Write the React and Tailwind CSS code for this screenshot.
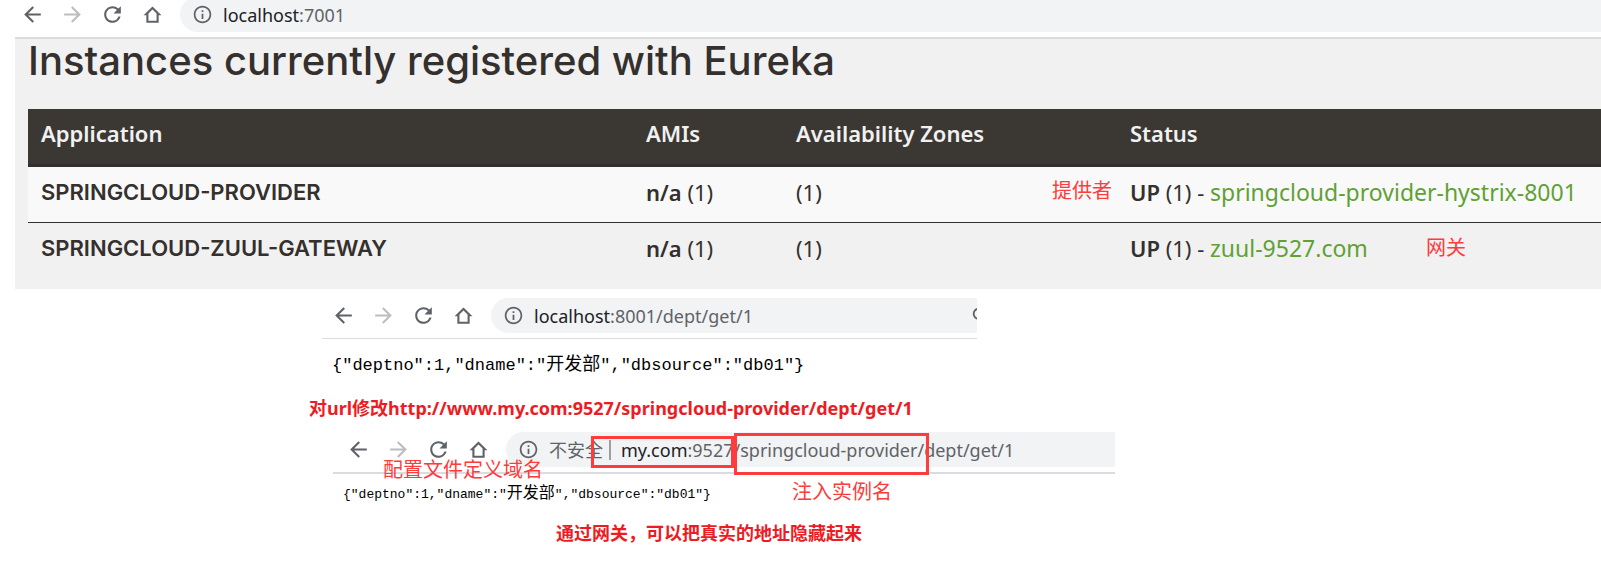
import React from "react";
import {
  MdArrowBack,
  MdArrowForward,
  MdInfoOutline,
  MdRefresh,
  MdSearch,
} from "react-icons/md";

const instances = [
  {
    name: "SPRINGCLOUD-PROVIDER",
    link: "springcloud-provider-hystrix-8001",
  },
  {
    name: "SPRINGCLOUD-ZUUL-GATEWAY",
    link: "zuul-9527.com",
  },
];

const HomeIcon = () => (
  <svg viewBox="0 0 24 24" className="size-[25px]" fill="currentColor">
    <path
      fillRule="evenodd"
      d="M12 4.4 3.4 12.8h2.7v7.2h11.8v-7.2h2.7zM12 7.2l3.9 3.8v7.1H8.1V11z"
    />
  </svg>
);

const Note = ({ className, children }) => (
  <span
    className={`absolute whitespace-nowrap text-xl leading-6 text-[#ff3b3b] ${className}`}
  >
    {children}
  </span>
);

const BrowserBar = ({ id, host, path, warning, clipped, className = "" }) => (
  <div className={`flex items-center pb-[5px] text-[#5f6368] ${className}`}>
    <div className="flex shrink-0 gap-[15px]">
      <button aria-label="Back">
        <MdArrowBack className="size-[25px]" />
      </button>
      <button aria-label="Forward" className="text-[#bbbdbf]">
        <MdArrowForward className="size-[25px]" />
      </button>
      <button aria-label="Reload">
        <MdRefresh className="size-[25px]" />
      </button>
      <button aria-label="Home">
        <HomeIcon />
      </button>
    </div>
    <div className="ml-[15px] flex h-[35px] min-w-0 flex-1 items-center overflow-hidden rounded-l-full bg-[#f1f3f4] pl-3 font-['Noto_Sans','Noto_Sans_CJK_SC',sans-serif] text-lg">
      <MdInfoOutline className="mr-[10px] size-[21px] shrink-0" />
      {warning && (
        <span className="mr-[10px] shrink-0 border-r-2 border-[#9aa0a6] pr-1.5 leading-5">
          {warning}
        </span>
      )}
      <label htmlFor={id} className="text-[#202124]">
        {host}
      </label>
      <input
        id={id}
        defaultValue={path}
        className="min-w-0 flex-1 bg-transparent outline-none"
      />
      {clipped && (
        <span className="w-[7px] shrink-0 overflow-hidden">
          <MdSearch className="size-[22px]" />
        </span>
      )}
    </div>
  </div>
);

const InstanceTable = () => (
  <table className="w-full table-fixed text-left font-['Noto_Sans',sans-serif] text-[22px] leading-[30px]">
    <thead>
      <tr className="border-b-[3px] border-[#34302d] bg-[#3b3833] text-[#f1f1f1]">
        <th className="w-[605px] px-[13px] pt-[9px] pb-4 font-semibold">
          Application
        </th>
        <th className="w-[150px] px-[13px] pt-[9px] pb-4 font-semibold">
          AMIs
        </th>
        <th className="w-[334px] px-[13px] pt-[9px] pb-4 font-semibold">
          Availability Zones
        </th>
        <th className="px-[13px] pt-[9px] pb-4 font-semibold">Status</th>
      </tr>
    </thead>
    <tbody>
      {instances.map((app) => (
        <tr
          key={app.name}
          className="odd:border-b odd:border-[#34302d] odd:bg-[#f9f9f9]"
        >
          <td className="px-[13px] pt-2.5 pb-[15px] font-['Inter',sans-serif] font-semibold">
            {app.name}
          </td>
          <td className="px-[13px] pt-2.5 pb-[15px]">
            <b className="font-semibold">n/a</b> (1)
          </td>
          <td className="px-[13px] pt-2.5 pb-[15px]">(1)</td>
          <td className="px-[13px] pt-2.5 pb-[15px] whitespace-nowrap">
            <b className="font-semibold">UP</b> (1) -{" "}
            <a href="#" className="text-[23px] text-[#5fa134]">
              {app.link}
            </a>
          </td>
        </tr>
      ))}
    </tbody>
  </table>
);

const Json = ({ className, cjkClassName }) => (
  <pre
    className={`pl-[10px] text-black font-['Liberation_Mono','Noto_Sans_CJK_SC',monospace] ${className}`}
  >
    {'{"deptno":1,"dname":"'}
    <span className={cjkClassName}>开发部</span>
    {'","dbsource":"db01"}'}
  </pre>
);

const App = () => {
  return (
    <div className="min-h-screen overflow-hidden bg-white font-['Noto_Sans','Noto_Sans_CJK_SC',sans-serif]">
      <section className="relative pl-[15px]">
        <BrowserBar
          id="eureka-url"
          host="localhost"
          path=":7001"
          className="-mt-[3px] pl-[5px]"
        />
        <div className="border-t-2 border-[#dadce0] bg-[#f1f1f1] pb-[11px] pl-[13px] text-[#34302d]">
          <h1 className="pb-[26px] font-['Inter',sans-serif] text-[40px] leading-[44px] font-medium">
            Instances currently registered with Eureka
          </h1>
          <InstanceTable />
        </div>
        <Note className="top-[182px] left-[1052px]">提供者</Note>
        <Note className="top-[239px] left-[1426px]">网关</Note>
      </section>

      <section className="mt-[9px] ml-[322px] w-[655px] max-w-full">
        <BrowserBar
          id="dept-url"
          host="localhost"
          path=":8001/dept/get/1"
          clipped
          className="pl-[9px]"
        />
        <Json
          className="border-t border-[#dadce0] pt-3.5 text-[17px] leading-6"
          cjkClassName="text-lg leading-6"
        />
      </section>

      <p className="mt-[18px] ml-[309px] text-lg leading-6 font-bold text-[#ed1c24]">
        对url修改http://www.my.com:9527/springcloud-provider/dept/get/1
      </p>

      <section className="relative mt-3 ml-[333px] w-[782px] max-w-full">
        <BrowserBar
          id="gateway-url"
          warning="不安全"
          host="my.com"
          path=":9527/springcloud-provider/dept/get/1"
          className="pl-[13px]"
        />
        <Json
          className="border-t-2 border-[#dadce0] pt-2 text-[13px] leading-6"
          cjkClassName="text-base leading-6"
        />
        <div className="absolute top-1 left-[258px] h-8 w-[143px] border-3 border-[#ff3b3b]" />
        <div className="absolute top-px left-[401px] h-[42px] w-[195px] border-3 border-[#ff3b3b]" />
        <Note className="top-[26px] left-[50px]">配置文件定义域名</Note>
        <Note className="top-[48px] left-[459px]">注入实例名</Note>
      </section>

      <p className="mt-3.5 ml-[556px] text-lg leading-6 font-bold text-[#ed1c24]">
        通过网关，可以把真实的地址隐藏起来
      </p>
    </div>
  );
};

export default App;
